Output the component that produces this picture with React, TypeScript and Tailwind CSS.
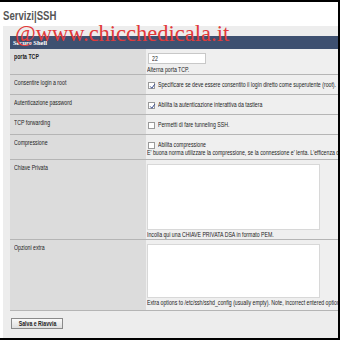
import type { ReactNode } from "react";

const sans = "font-['Liberation_Sans',Arial,sans-serif]";

// the source screenshot is squeezed sideways, so text is narrowed to match
function T({ children }: { children: ReactNode }) {
  return <span className="inline-block origin-left scale-x-[0.8] whitespace-nowrap">{children}</span>;
}

type RowProps = {
  label: string;
  bold?: boolean;
  height: string;
  children: ReactNode;
};

function Row({ label, bold, height, children }: RowProps) {
  return (
    <div className={`grid grid-cols-[136px_1fr] border-b border-[#b5b5b5] ${height}`}>
      <div
        className={`bg-[#dcdcdc] pl-[4px] pt-[4px] text-[6.5px] leading-[8px] text-[#222] ${bold ? "font-bold" : ""}`}
      >
        <T>{label}</T>
      </div>
      <div className="min-w-0 overflow-hidden bg-[#efefef] pl-[1px] pt-[4px] text-[6.5px] leading-[8px] text-[#222]">
        {children}
      </div>
    </div>
  );
}

function Checkbox({ checked }: { checked?: boolean }) {
  return (
    <span className="relative inline-block size-[7px] shrink-0 border border-[#9a9a9a] bg-white">
      {checked ? (
        <svg viewBox="0 0 7 7" className="absolute inset-0 size-[7px]">
          <path d="M1.2 3.4 L2.8 5.2 L5.8 1.2" fill="none" stroke="#34488a" strokeWidth="1" />
        </svg>
      ) : null}
    </span>
  );
}

function CheckLine({ checked, text }: { checked?: boolean; text: string }) {
  return (
    <div className="flex items-center gap-[3px] pl-[1px] pt-[2px]">
      <Checkbox checked={checked} />
      <T>{text}</T>
    </div>
  );
}

export default function App() {
  return (
    <div
      className={`relative h-[340px] w-[340px] overflow-hidden border-t-[2px] border-r-[2px] border-b-[2px] border-black bg-white ${sans}`}
    >
      <div className="pl-[3px] pt-[7px] text-[12px] font-bold leading-[14px] text-[#555]">
        <T>Servizi|SSH</T>
      </div>

      <div className="ml-[3px] mt-[3px] flex h-[312px] flex-col bg-[#ededed] pl-[7px] pt-[10px]">
        <div className="flex h-[13px] items-center bg-[#3e5070] pl-[3px] font-['Liberation_Serif',serif] text-[6.5px] font-bold text-white">
          Secure Shell
        </div>

        <Row label="porta TCP" bold height="h-[26px]">
          <div className="ml-[1px] h-[11px] w-[58px] border border-[#c8c8c8] bg-white pl-[3px] text-[6.5px] leading-[9px]">
            <T>22</T>
          </div>
          <div className="pt-[2px]">
            <T>Alterna porta TCP.</T>
          </div>
        </Row>

        <Row label="Consentire login a root" height="h-[20px]">
          <CheckLine checked text="Specificare se deve essere consentito il login diretto come superutente (root)." />
        </Row>

        <Row label="Autenticazione password" height="h-[20px]">
          <CheckLine checked text="Abilita la autenticazione interattiva da tastiera" />
        </Row>

        <Row label="TCP forwarding" height="h-[20px]">
          <CheckLine text="Permetti di fare tunneling SSH." />
        </Row>

        <Row label="Compressione" height="h-[25px]">
          <CheckLine text="Abilita compressione" />
          <div>
            <T>E' buona norma utilizzare la compressione, se la connessione e' lenta. L'efficenza della compressione</T>
          </div>
        </Row>

        <Row label="Chiave Privata" height="h-[80px]">
          <div className="h-[66px] w-[173px] border border-[#d8d8d8] bg-white" />
          <div className="pt-[1px]">
            <T>Incolla qui una CHIAVE PRIVATA DSA in formato PEM.</T>
          </div>
        </Row>

        <Row label="Opzioni extra" height="h-[71px]">
          <div className="h-[54px] w-[173px] border border-[#d8d8d8] bg-white" />
          <div className="pt-[1px]">
            <T>Extra options to /etc/ssh/sshd_config (usually empty). Note, incorrect entered options may</T>
          </div>
        </Row>

        <div className="flex pl-[1px] pt-[7px]">
          <button
            type="button"
            className="flex h-[11px] w-[52px] items-center justify-center border border-[#8a8a8a] bg-gradient-to-b from-[#fafafa] to-[#dedede] text-[6.5px] font-bold text-[#222]"
          >
            <span className="inline-block scale-x-[0.8] whitespace-nowrap">Salva e Riavvia</span>
          </button>
        </div>
      </div>

      <div className="pointer-events-none absolute left-[15px] top-[19px] font-['Liberation_Serif',serif] text-[22.5px] leading-[26px] text-[#e23a3a]">
        @www.chicchedicala.it
      </div>
    </div>
  );
}
